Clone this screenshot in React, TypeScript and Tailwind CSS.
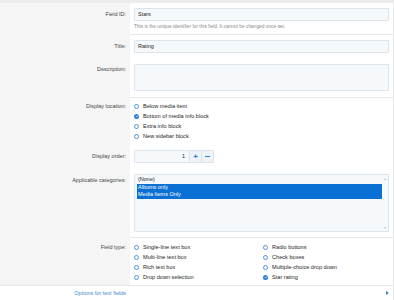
import React from 'react';

const font = { fontFamily: '"Liberation Sans", Arial, sans-serif' };

const Radio: React.FC<{ checked?: boolean; label: string }> = ({ checked, label }) => (
    <div className="flex items-center h-[10px] gap-[4px]">
        {checked ? (
            <span className="w-[5px] h-[5px] rounded-full bg-[#2a7fd0] flex items-center justify-center shrink-0">
                <svg width="4" height="4" viewBox="0 0 8 8">
                    <path d="M1.5 4.2 L3.3 6 L6.6 2.2" fill="none" stroke="#fff" strokeWidth="1.4" />
                </svg>
            </span>
        ) : (
            <span className="w-[5px] h-[5px] rounded-full border border-[#4f93d6] bg-white shrink-0" />
        )}
        <span className="text-[5.6px] leading-[10px] text-[#1e1e1e] whitespace-nowrap">{label}</span>
    </div>
);

const Label: React.FC<{ text: string; className?: string }> = ({ text, className }) => (
    <div className={`w-[130px] shrink-0 bg-[#f5f5f5] text-right pr-[4px] text-[5.5px] text-[#454545] ${className ?? ''}`}>
        {text}
    </div>
);

const inputCls = 'border border-[#dde3ea] bg-[#f6f9fc] rounded-[1px]';

export default function App() {
    return (
        <div className="w-[394px] h-[300px] bg-white overflow-hidden" style={font}>
            <div className="h-[3px] bg-[#ececec]" />

            {/* Field ID */}
            <div className="flex">
                <Label text="Field ID:" className="pt-[5px] leading-[13px]" />
                <div className="flex-1 border-r border-[#e6e6e6] pl-[4px] pr-[4px] pt-[5px]">
                    <div className={`${inputCls} h-[13px] pl-[3px] text-[5.5px] leading-[11px] text-[#1e1e1e]`}>Stars</div>
                    <div className="h-[8px] mt-[2px] text-[4.8px] leading-[8px] text-[#8a8a8a] whitespace-nowrap">
                        This is the unique identifier for this field. It cannot be changed once set.
                    </div>
                    <div className="h-[3px]" />
                    <div className="h-px bg-[#e8e8e8] -ml-[4px] -mr-[4px]" />
                </div>
            </div>

            {/* Title */}
            <div className="flex">
                <Label text="Title:" className="pt-[5px] leading-[13px]" />
                <div className="flex-1 border-r border-[#e6e6e6] px-[4px] pt-[5px] pb-[6px]">
                    <div className={`${inputCls} h-[13px] pl-[3px] text-[5.5px] leading-[11px] text-[#1e1e1e]`}>Rating</div>
                </div>
            </div>

            {/* Description */}
            <div className="flex">
                <Label text="Description:" className="pt-[4px] leading-[13px]" />
                <div className="flex-1 border-r border-[#e6e6e6] pl-[4px] pr-[4px] pt-[5px]">
                    <div className={`${inputCls} h-[27px]`} />
                    <div className="h-[6px]" />
                    <div className="h-px bg-[#e8e8e8] -ml-[4px] -mr-[4px]" />
                </div>
            </div>

            {/* Display location */}
            <div className="flex">
                <Label text="Display location:" className="pt-[3px] leading-[10px]" />
                <div className="flex-1 border-r border-[#e6e6e6] px-[4px] pt-[3px] pb-[4px]">
                    <Radio label="Below media item" />
                    <Radio checked label="Bottom of media info block" />
                    <Radio label="Extra info block" />
                    <Radio label="New sidebar block" />
                </div>
            </div>

            {/* Display order */}
            <div className="flex">
                <Label text="Display order:" className="pt-[5px] leading-[13px]" />
                <div className="flex-1 border-r border-[#e6e6e6] px-[4px] pt-[5px] pb-[5px]">
                    <div className={`${inputCls} h-[13px] w-[80px] flex`}>
                        <div className="flex-1 text-right pr-[4px] text-[5.5px] leading-[11px] text-[#1e1e1e]">1</div>
                        <div className="w-[12px] bg-[#eef3f9] border-l border-[#dde3ea] flex items-center justify-center text-[8px] leading-[11px] font-bold text-[#2a7fd0]">+</div>
                        <div className="w-[12px] bg-[#eef3f9] border-l border-[#dde3ea] flex items-center justify-center">
                            <span className="block w-[5px] h-px bg-[#2a7fd0]" />
                        </div>
                    </div>
                </div>
            </div>

            {/* Applicable categories */}
            <div className="flex">
                <Label text="Applicable categories:" className="pt-[6px] leading-[12px]" />
                <div className="flex-1 border-r border-[#e6e6e6] pl-[4px] pr-[4px] pt-[6px]">
                    <div className={`${inputCls} h-[58px] flex pl-[2px] pt-[1px]`}>
                        <div className="flex-1 text-[5.5px] leading-[7.5px] text-[#1e1e1e]">
                            <div className="pl-[1px]">(None)</div>
                            <div className="pl-[1px] bg-[#0a70d4] text-white">Albums only</div>
                            <div className="pl-[1px] bg-[#0a70d4] text-white">Media Items Only</div>
                        </div>
                        <div className="w-[6px] flex flex-col justify-between items-center text-[#b5b5b5] text-[3px] leading-[4px] py-[1px]">
                            <span>▲</span>
                            <span>▼</span>
                        </div>
                    </div>
                    <div className="h-[5px]" />
                    <div className="h-px bg-[#e8e8e8] -ml-[4px] -mr-[4px]" />
                </div>
            </div>

            {/* Field type */}
            <div className="flex">
                <Label text="Field type:" className="pt-[4px] leading-[10px]" />
                <div className="flex-1 border-r border-[#e6e6e6] px-[4px] pt-[4px] pb-[3px] grid grid-cols-[129px_1fr]">
                    <div>
                        <Radio label="Single-line text box" />
                        <Radio label="Multi-line text box" />
                        <Radio label="Rich text box" />
                        <Radio label="Drop down selection" />
                    </div>
                    <div>
                        <Radio label="Radio buttons" />
                        <Radio label="Check boxes" />
                        <Radio label="Multiple-choice drop down" />
                        <Radio checked label="Star rating" />
                    </div>
                </div>
            </div>

            {/* Options header */}
            <div className="flex items-center h-[15px] border-t border-[#e8e8e8] border-r border-r-[#e6e6e6]">
                <div className="w-[130px] text-right pr-[4px] text-[5.5px] leading-[15px] text-[#3d86cc]">Options for text fields</div>
                <div className="flex-1 flex justify-end pr-[4px]">
                    <svg width="3" height="4" viewBox="0 0 3 4">
                        <path d="M0 0 L3 2 L0 4 Z" fill="#3d86cc" />
                    </svg>
                </div>
            </div>
        </div>
    );
}
